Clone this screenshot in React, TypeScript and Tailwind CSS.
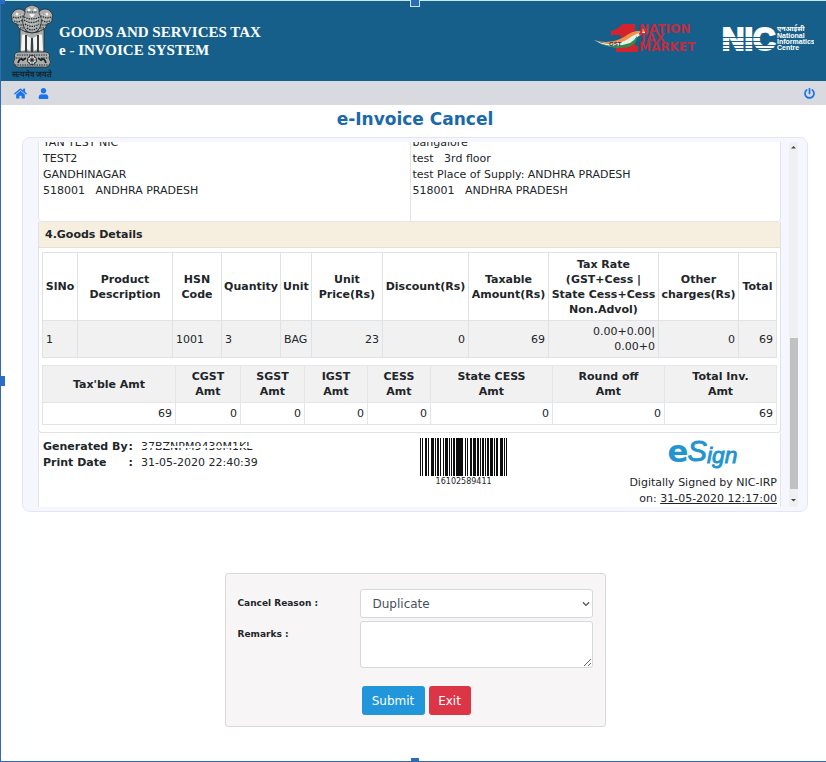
import { FaHome, FaUser, FaPowerOff, FaChevronDown } from "react-icons/fa";

function Emblem() {
  return (
    <svg viewBox="0 0 46 64" className="h-16 w-[46px]" aria-label="State emblem of India" role="img">
      <g fill="#a9adac" stroke="#22282b" strokeWidth="0.8">
        <path d="M8 19 Q2 18 3 13 Q1 10 4 7 Q8 2 14 5 L18 9 L17 27 Q11 26 9 22Z" />
        <path d="M38 19 Q44 18 43 13 Q45 10 42 7 Q38 2 32 5 L28 9 L29 27 Q35 26 37 22Z" />
        <path d="M16 8 Q15 2 20 1 Q23 -1 26 1 Q31 2 30 8 Q34 14 32 20 Q29 28 23 28 Q17 28 14 20 Q12 14 16 8Z" />
        <path d="M11 24 Q23 32 35 24 L35 43 Q36 47 33 48 H13 Q10 47 11 43Z" />
        <path d="M9 47 H37 Q42 48 40 53 Q43 57 40 61 Q37 63 34 62 H12 Q9 63 6 61 Q3 57 6 53 Q4 48 9 47Z" />
      </g>
      <g fill="#f4f4f0">
        <path d="M13 30 L16 29 L16 45 L12 46Z M18 31 L22 33 L21 46 L18 44Z M24 33 L28 31 L28 44 L25 46Z M30 29 L33 30 L34 46 L30 45Z" />
        <circle cx="20" cy="5" r="1.6" />
        <circle cx="26" cy="5" r="1.6" />
        <circle cx="8" cy="9" r="1.5" />
        <circle cx="38" cy="9" r="1.5" />
        <path d="M20 9 H26 L24 12 H22Z" />
      </g>
      <g fill="none" stroke="#1d2326" strokeWidth="1.2" strokeDasharray="1.4 1">
        <path d="M4 12 Q8 14 14 11 M5 16 Q9 18 14 15 M9 20 L15 20 M42 12 Q38 14 32 11 M41 16 Q37 18 32 15 M37 20 H31 M11 23 H16 M35 23 H30" />
        <path d="M15 12 Q23 16 31 12 M15 15 Q23 20 31 15 M16 19 Q23 24 30 19 M18 23 Q23 27 28 23 M18 7 H28" />
        <path d="M8 50 H38 M6 60 H40 M7 53 H14 M32 53 H39" />
      </g>
      <g fill="none" stroke="#f0f0ec" strokeWidth="0.7" strokeDasharray="1 1.6">
        <path d="M5 10 Q9 12 14 9 M6 14 Q10 16 14 13 M41 10 Q37 12 32 9 M40 14 Q36 16 32 13 M16 13.5 Q23 18 30 13.5 M17 17 Q23 22 29 17 M19 21 Q23 25 27 21" />
      </g>
      <g fill="none" stroke="#1d2326">
        <path d="M17 30 L17 47 M23 33 V47 M29 30 V47" strokeWidth="1.6" />
        <circle cx="23" cy="55" r="4.5" fill="#e4e4e0" />
        <circle cx="23" cy="55" r="1.2" />
        <path d="M23 51 V59 M19 55 H27 M20 52 L26 58 M26 52 L20 58" strokeWidth="0.6" />
        <path d="M9 58 Q11 52 14 55 L17 53 M37 58 Q35 52 32 55 L29 53" strokeWidth="1.8" />
      </g>
    </svg>
  );
}

function MarketLogo() {
  return (
    <svg viewBox="0 0 122 36" className="h-9 w-[122px] shrink-0" role="img" aria-label="Nation Tax Market">
      <path d="M19 11 Q27 9 30 4 H43 V26 H46 V32 H24 V26 H29 V15 H19Z" fill="#d4232f" />
      <path d="M2 20 Q18 28 34 18 Q42 10 49 11 L56 9 L53 13 Q46 15 42 21 Q32 30 16 26 Q8 24 2 20Z" fill="#e9efe6" />
      <path d="M2 20 Q18 25 32 17 Q41 10 48 11 L52 8 L56 11 Q45 12 36 19 Q22 28 2 20Z" fill="#ef9148" />
      <path d="M2 20 Q18 30 38 23 Q43 20 45 16 Q46 23 37 27 Q20 31 2 20Z" fill="#348a48" />
      <text x="17" y="26" fontSize="6" fontWeight="bold" fill="#26364a" fontFamily="Liberation Sans, sans-serif">GST</text>
      <g fill="#c12c3e" fontSize="12" fontWeight="bold" fontFamily="DejaVu Sans, sans-serif">
        <text x="47" y="13">NATION</text>
        <text x="47" y="22">TAX</text>
        <text x="47" y="31">MARKET</text>
      </g>
    </svg>
  );
}

function NicLogo() {
  return (
    <svg viewBox="0 0 92 36" className="h-9 w-[92px] shrink-0" role="img" aria-label="National Informatics Centre">
      <text x="0" y="30" fontSize="31" fontWeight="bold" fill="#fff" stroke="#fff" strokeWidth="2" fontFamily="Liberation Sans, sans-serif">NIC</text>
      <path d="M0 17.5H54M0 21.5H54M0 25.5H54M0 28.5H54" stroke="#175f8b" strokeWidth="1" />
      <g fill="#fff" fontSize="7" fontWeight="bold" fontFamily="Liberation Sans, Noto Sans, sans-serif">
        <text x="55" y="11">एनआईसी</text>
        <text x="55" y="18">National</text>
        <text x="55" y="24">Informatics</text>
        <text x="55" y="30">Centre</text>
      </g>
    </svg>
  );
}

const bars: [number, number][] = [
  [0, 1], [2, 1], [5, 2], [8, 1], [11, 3], [15, 1], [17, 2], [20, 1], [23, 1], [25, 3], [29, 1], [31, 1], [33, 2], [36, 7], [45, 1], [47, 1],
  [50, 2], [53, 3], [57, 2], [60, 1], [62, 2], [65, 1], [67, 2], [70, 3], [74, 1], [76, 2], [80, 3], [84, 1], [86, 1],
];

function Barcode() {
  return (
    <figure className="flex flex-col items-center">
      <svg viewBox="0 0 87 38" className="h-[38px] w-[87px]" aria-hidden="true">
        {bars.map(([x, w]) => (
          <rect key={x} x={x} y="0" width={w} height="38" fill="#0d0d0d" />
        ))}
      </svg>
      <figcaption className="text-[8px] leading-3">16102589411</figcaption>
    </figure>
  );
}

const goodsCols = [
  { w: 35, label: "SlNo", value: "1" },
  { w: 95, label: "Product Description", value: "" },
  { w: 49, label: "HSN Code", value: "1001" },
  { w: 59, label: "Quantity", value: "3" },
  { w: 31, label: "Unit", value: "BAG" },
  { w: 71, label: "Unit Price(Rs)", value: "23", right: true },
  { w: 86, label: "Discount(Rs)", value: "0", right: true },
  { w: 80, label: "Taxable Amount(Rs)", value: "69", right: true },
  { w: 110, label: "Tax Rate (GST+Cess | State Cess+Cess Non.Advol)", value: "0.00+0.00|\n0.00+0", right: true },
  { w: 80, label: "Other charges(Rs)", value: "0", right: true },
  { w: 38, label: "Total", value: "69", right: true },
];

const amountCols = [
  { w: 133, label: ["Tax'ble Amt"], value: "69" },
  { w: 65, label: ["CGST", "Amt"], value: "0" },
  { w: 64, label: ["SGST", "Amt"], value: "0" },
  { w: 63, label: ["IGST", "Amt"], value: "0" },
  { w: 63, label: ["CESS", "Amt"], value: "0" },
  { w: 122, label: ["State CESS", "Amt"], value: "0" },
  { w: 112, label: ["Round off", "Amt"], value: "0" },
  { w: 112, label: ["Total Inv.", "Amt"], value: "69" },
];

function GoodsTable() {
  return (
    <table className="w-full table-fixed border-collapse text-[11px] leading-[15px]">
      <colgroup>
        {goodsCols.map((c) => (
          <col key={c.label} style={{ width: `${(c.w / 734) * 100}%` }} />
        ))}
      </colgroup>
      <thead>
        <tr className="h-[68px]">
          {goodsCols.map((c) => (
            <th key={c.label} className="border border-[#dfe3e6] px-px font-bold">{c.label}</th>
          ))}
        </tr>
      </thead>
      <tbody>
        <tr className="h-[37px] bg-[#f1f1f1]">
          {goodsCols.map((c) => (
            <td
              key={c.label}
              className={c.right ? "border border-[#dfe3e6] pr-[3px] text-right whitespace-pre-line" : "border border-[#dfe3e6] pl-[3px]"}
            >
              {c.value}
            </td>
          ))}
        </tr>
      </tbody>
    </table>
  );
}

function AmountTable() {
  return (
    <table className="w-full table-fixed border-collapse text-[11px] leading-[15px]">
      <colgroup>
        {amountCols.map((c) => (
          <col key={c.label.join()} style={{ width: `${(c.w / 734) * 100}%` }} />
        ))}
      </colgroup>
      <thead>
        <tr className="h-[37px] bg-[#f1f1f1]">
          {amountCols.map((c) => (
            <th key={c.label.join()} className="border border-[#e3e5e8] font-bold">
              {c.label.map((part) => (
                <div key={part}>{part}</div>
              ))}
            </th>
          ))}
        </tr>
      </thead>
      <tbody>
        <tr className="h-[22px]">
          {amountCols.map((c) => (
            <td key={c.label.join()} className="border border-[#e3e5e8] pr-[3px] text-right">{c.value}</td>
          ))}
        </tr>
      </tbody>
    </table>
  );
}

function Invoice() {
  return (
    <div className="flex h-full min-w-0 flex-1 flex-col justify-end overflow-hidden text-[11px] leading-4">
      <section className="grid shrink-0 grid-cols-2 rounded-b-sm border border-[#e3e5e8] bg-white whitespace-pre">
        <div className="pb-[22px] pl-1">
          <p>TAN TEST NIC</p>
          <p>TEST2</p>
          <p>GANDHINAGAR</p>
          <p>{"518001   ANDHRA PRADESH"}</p>
        </div>
        <div className="border-l border-[#e3e5e8] pb-[22px] pl-0.5">
          <p>bangalore</p>
          <p>{"test   3rd floor"}</p>
          <p>test Place of Supply: ANDHRA PRADESH</p>
          <p>{"518001   ANDHRA PRADESH"}</p>
        </div>
      </section>
      <section className="shrink-0 rounded-b-sm border border-t-0 border-[#dfe2e6] bg-white">
        <h2 className="border-b border-[#e6dfd2] bg-[#f6eedf] px-1.5 pt-[5px] pb-1 font-bold">4.Goods Details</h2>
        <div className="flex flex-col gap-[7px] px-[3px] pt-1 pb-[7px]">
          <GoodsTable />
          <AmountTable />
        </div>
      </section>
      <section className="flex h-[74px] shrink-0 justify-between border-x border-[#e3e5e8] bg-white pr-[3px] pl-1">
        <dl className="grid h-8 grid-cols-[auto_auto] gap-x-2 pt-1.5">
          <dt className="flex w-[90px] justify-between font-bold whitespace-nowrap"><span>Generated By</span><span>:</span></dt>
          <dd className="relative">
            37BZNPM9430M1KL
            <span className="absolute inset-x-0 top-[7px] h-0.5 bg-white" />
            <span className="absolute inset-x-0 bottom-0 h-1 bg-white" />
          </dd>
          <dt className="flex w-[90px] justify-between font-bold"><span>Print Date</span><span>:</span></dt>
          <dd>31-05-2020 22:40:39</dd>
        </dl>
        <div className="pt-[5px] pl-10"><Barcode /></div>
        <div className="flex flex-col items-center">
          <svg viewBox="0 0 80 44" className="h-11 w-20" role="img" aria-label="eSign">
            <g fill="#2294cf" stroke="#2294cf">
              <text x="1" y="32" fontSize="34" fontWeight="bold" strokeWidth="0" fontFamily="DejaVu Sans, sans-serif">e</text>
              <text x="23" y="31" fontSize="32" fontStyle="italic" fontFamily="Liberation Sans, sans-serif">
                S<tspan fontSize="25" dy="2">ign</tspan>
              </text>
            </g>
          </svg>
          <p className="w-full pt-0.5 text-right">
            Digitally Signed by NIC-IRP
            <br />on: <span className="underline">31-05-2020 12:17:00</span>
          </p>
        </div>
      </section>
    </div>
  );
}

function ScrollTrack() {
  return (
    <div className="ml-2 flex w-[9px] flex-col items-center bg-[#f0f0f2]" aria-hidden="true">
      <svg viewBox="0 0 9 10" className="h-2.5 w-[9px]"><path d="M2 6.5 L4.5 4 L7 6.5Z" fill="#444" /></svg>
      <div className="flex-1" />
      <div className="h-[151px] w-2 bg-[#c1c1c1]" />
      <svg viewBox="0 0 9 18" className="h-[18px] w-[9px]"><path d="M2 10 L4.5 12.5 L7 10Z" fill="#444" /></svg>
    </div>
  );
}

export default function App() {
  return (
    <div className="relative flex min-h-screen flex-col border-l border-[#2b6cb5] bg-white font-['DejaVu_Sans',Verdana,sans-serif] text-[#212529]">
      <header className="flex h-[81px] items-start border-t border-[#c8e6f3] bg-[#175f8b] pr-3 pl-2">
        <div className="flex flex-col items-center pt-1">
          <Emblem />
          <span className="h-3 text-[8px] leading-3 font-bold whitespace-nowrap text-[#15242c]">सत्यमेव जयते</span>
        </div>
        <h1 className="ml-1 flex-1 pt-[22px] font-['Liberation_Serif',serif] text-[15px] leading-[18px] font-bold text-white">
          GOODS AND SERVICES TAX
          <br />e - INVOICE SYSTEM
        </h1>
        <div className="flex gap-2 pt-[19px]">
          <MarketLogo />
          <NicLogo />
        </div>
      </header>
      <nav className="flex h-6 items-center bg-[#d9dadf] pr-[11px] pl-[13px] text-[#1a73e8]">
        <a href="#home" aria-label="Home"><FaHome className="size-[13px]" /></a>
        <a href="#profile" aria-label="Profile" className="ml-[11px]"><FaUser className="size-[11px]" /></a>
        <a href="#logout" aria-label="Log out" className="ml-auto"><FaPowerOff className="size-[11px]" /></a>
      </nav>
      <main className="flex flex-col pr-[18px] pl-[21px]">
        <h2 className="pt-0.5 pb-1.5 text-center text-[17px] leading-6 font-bold text-[#1a69ab]">e-Invoice Cancel</h2>
        <div className="flex h-[375px] rounded-lg border border-[#e4e7f3] bg-[#f6f7fe] py-1 pr-[9px] pl-[15px]">
          <Invoice />
          <ScrollTrack />
        </div>
        <form className="mx-auto mt-[61px] grid w-[381px] grid-cols-[122px_1fr] gap-y-[3px] rounded-[3px] border border-[#d9d9db] bg-[#f7f5f6] px-3 pt-[15px] pb-[11px]">
          <label htmlFor="reason" className="pt-2 text-[9px] leading-3 font-bold">Cancel Reason :</label>
          <div className="relative">
            <select id="reason" className="h-[29px] w-full appearance-none rounded-[3px] border border-[#d5d8dc] bg-white px-3 text-xs text-[#495057]">
              <option>Duplicate</option>
              <option>Data entry mistake</option>
            </select>
            <FaChevronDown className="pointer-events-none absolute top-[11px] right-[3px] size-2 text-[#555]" />
          </div>
          <label htmlFor="remarks" className="pt-[7px] text-[9px] leading-3 font-bold">Remarks :</label>
          <textarea id="remarks" className="h-[47px] w-full rounded-[3px] border border-[#d5d8dc] bg-white px-3 text-xs" />
          <div className="col-start-2 flex gap-1 pt-[15px] pl-0.5">
            <button type="submit" className="h-[29px] w-[63px] rounded-[3px] bg-[#2196db] text-xs text-white">Submit</button>
            <button type="button" className="h-[29px] w-[42px] rounded-[3px] bg-[#dc3545] text-xs text-white">Exit</button>
          </div>
        </form>
      </main>
      <div className="pointer-events-none absolute inset-0 border-b border-[#2b6cb5]" aria-hidden="true">
        <span className="absolute top-0 left-0 size-1 bg-[#2b6cd0]" />
        <span className="absolute top-0 left-1/2 -ml-[3px] h-1.5 w-2 bg-[#2b6cb5] outline outline-[#c8e6f3]" />
        <span className="absolute top-[376px] left-0 h-2.5 w-1 bg-[#2b6cd0]" />
        <span className="absolute bottom-0 left-1/2 -ml-[3px] h-[3px] w-2 bg-[#2b6cb5]" />
      </div>
    </div>
  );
}
